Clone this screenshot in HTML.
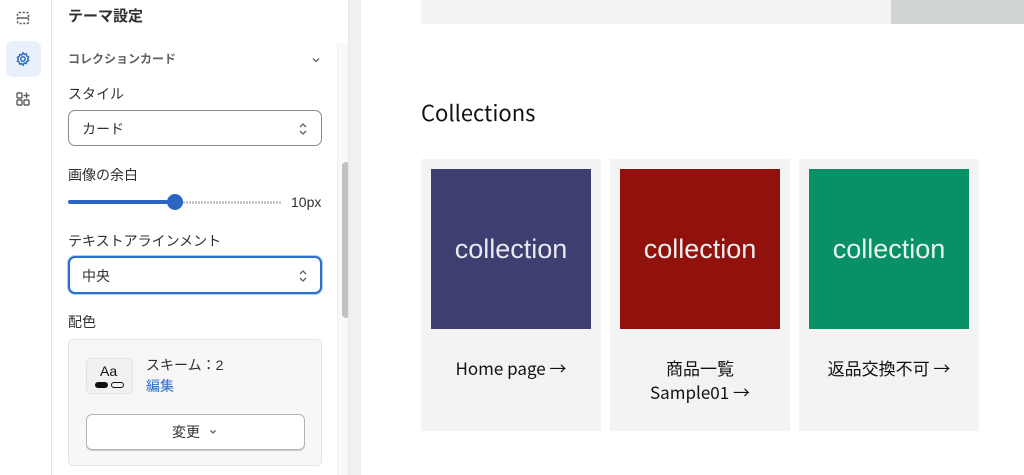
<!DOCTYPE html>
<html><head><meta charset="utf-8"><style>
*{box-sizing:border-box;margin:0;padding:0}
body{width:1024px;height:475px;overflow:hidden;background:#fff;font-family:"Liberation Sans","Noto Sans CJK JP",sans-serif;color:#303030;position:relative}
.abs{position:absolute}
.t{position:absolute;white-space:nowrap;line-height:1}
.sel{position:absolute;left:68px;width:254px;border:1px solid #8a8a8a;border-radius:7px;background:#fff;font-size:14px}
</style></head><body>
<!-- rail -->
<div class="abs" style="left:0;top:0;width:52px;height:475px;background:#fff;border-right:1px solid #e3e3e3"></div>
<div class="abs" style="left:6px;top:41px;width:35px;height:36px;background:#eaf0fb;border-radius:7px"></div>
<svg class="abs" style="left:15px;top:10px" width="16" height="16" viewBox="0 0 16 16" fill="none" stroke="#5c5f62" stroke-width="1.5"><rect x="2.5" y="2.5" width="11" height="11" rx="1.5" stroke-dasharray="2.2 1.5"/><path d="M2.5 8h11"/></svg>
<svg class="abs" style="left:15px;top:51px" width="16" height="16" viewBox="0 0 16 16" fill="none" stroke="#2c6ecb" stroke-width="1.5"><circle cx="8" cy="8" r="2.2"/><path d="M8 1.8l1.3 1.6 2-.5.4 2 1.9.9-.9 1.9.9 1.9-1.9.9-.4 2-2-.5L8 14.2l-1.3-1.6-2 .5-.4-2-1.9-.9.9-1.9-.9-1.9 1.9-.9.4-2 2 .5z"/></svg>
<svg class="abs" style="left:15px;top:91px" width="16" height="16" viewBox="0 0 16 16" fill="none" stroke="#5c5f62" stroke-width="1.4"><rect x="2" y="2" width="5" height="5" rx="1"/><rect x="2" y="9" width="5" height="5" rx="1"/><rect x="9" y="9" width="5" height="5" rx="1"/><path d="M11.5 1.5v6M8.5 4.5h6"/></svg>
<!-- panel -->
<div class="t" style="left:68px;top:9px;font-size:15px;font-weight:bold;color:#303030">テーマ設定</div>
<div class="abs" style="left:337px;top:43px;width:11px;height:432px;background:#f9f9f9;border-left:1px solid #eee"></div>
<div class="abs" style="left:342px;top:162px;width:8px;height:156px;background:#c1c1c1;border-radius:4px"></div>
<div class="abs" style="left:348px;top:0;width:13px;height:475px;background:#eff0f2;border-left:1px solid #e6e6e6"></div>
<div class="t" style="left:68px;top:53px;font-size:12px;font-weight:bold;color:#616161">コレクションカード</div>
<svg class="abs" style="left:310px;top:54px" width="12" height="12" viewBox="0 0 12 12" fill="none" stroke="#5c5f62" stroke-width="1.3"><path d="M3 4.5l3 3 3-3"/></svg>
<div class="t" style="left:68px;top:87px;font-size:14px">スタイル</div>
<div class="sel" style="top:110px;height:36px"><span class="t" style="left:13px;top:11px">カード</span>
<svg class="abs" style="left:228px;top:10px" width="12" height="16" viewBox="0 0 12 16" fill="none" stroke="#5c5f62" stroke-width="1.3"><path d="M3 6l3-3 3 3M3 10l3 3 3-3"/></svg></div>
<div class="t" style="left:68px;top:168px;font-size:14px">画像の余白</div>
<div class="abs" style="left:68px;top:200px;width:107px;height:4px;background:#2c64c4;border-radius:2px"></div>
<div class="abs" style="left:183px;top:201px;width:99px;height:3px;background:repeating-linear-gradient(90deg,#c9c9c9 0 2px,transparent 2px 3px)"></div>
<div class="abs" style="left:167px;top:194px;width:16px;height:16px;background:#2c64c4;border-radius:50%"></div>
<div class="t" style="left:291px;top:195px;font-size:14px">10px</div>
<div class="t" style="left:68px;top:234px;font-size:14px">テキストアラインメント</div>
<div class="sel" style="top:256px;height:38px;border:2px solid #2c6ecb;box-shadow:0 0 0 1px #b5cdf0"><span class="t" style="left:12px;top:11px">中央</span>
<svg class="abs" style="left:227px;top:10px" width="12" height="16" viewBox="0 0 12 16" fill="none" stroke="#5c5f62" stroke-width="1.3"><path d="M3 6l3-3 3 3M3 10l3 3 3-3"/></svg></div>
<div class="t" style="left:68px;top:315px;font-size:14px">配色</div>
<div class="abs" style="left:68px;top:339px;width:254px;height:127px;background:#f7f7f8;border:1px solid #e3e3e3;border-radius:5px"></div>
<div class="abs" style="left:86px;top:358px;width:47px;height:36px;background:#f1f1f1;border:1px solid #e3e3e3;border-radius:4px"></div>
<div class="t" style="left:100px;top:364px;font-size:14px;color:#111">Aa</div>
<div class="abs" style="left:95px;top:382px;width:13px;height:6px;background:#111;border-radius:3px"></div>
<div class="abs" style="left:111px;top:382px;width:13px;height:6px;border:1px solid #111;border-radius:3px"></div>
<div class="t" style="left:146px;top:358px;font-size:14px">スキーム：2</div>
<div class="t" style="left:146px;top:379px;font-size:14px;color:#2c6ecb">編集</div>
<div class="abs" style="left:86px;top:414px;width:219px;height:36px;background:#fff;border:1px solid #b5b5b5;border-radius:6px;box-shadow:0 1px 0 #ccc"></div>
<div class="t" style="left:172px;top:425px;font-size:14px">変更</div>
<svg class="abs" style="left:207px;top:426px" width="12" height="12" viewBox="0 0 12 12" fill="none" stroke="#5c5f62" stroke-width="1.3"><path d="M3.5 4.5l2.5 2.5 2.5-2.5"/></svg>
<!-- preview -->
<div class="abs" style="left:421px;top:0;width:470px;height:24px;background:#f3f3f3"></div>
<div class="abs" style="left:891px;top:0;width:133px;height:24px;background:#d0d5d2"></div>
<div class="t" style="left:421px;top:101px;font-size:22px;color:#121212;font-family:'Noto Sans CJK JP',sans-serif">Collections</div>
<div class="abs" style="left:421px;top:159px;width:180px;height:272px;background:#f3f3f3"></div>
<div class="abs" style="left:610px;top:159px;width:180px;height:272px;background:#f3f3f3"></div>
<div class="abs" style="left:799px;top:159px;width:180px;height:272px;background:#f3f3f3"></div>
<div class="abs" style="left:431px;top:169px;width:160px;height:160px;background:#3e3f71"></div>
<div class="abs" style="left:620px;top:169px;width:160px;height:160px;background:#91120c"></div>
<div class="abs" style="left:809px;top:169px;width:160px;height:160px;background:#0a9067"></div>
<div class="t" style="left:431px;top:236px;width:160px;text-align:center;font-size:27px;color:#e8e8f0">collection</div>
<div class="t" style="left:620px;top:236px;width:160px;text-align:center;font-size:27px;color:#eee">collection</div>
<div class="t" style="left:809px;top:236px;width:160px;text-align:center;font-size:27px;color:#e8f4ee">collection</div>
<div style="position:absolute;font-family:'Noto Sans CJK JP',sans-serif;font-size:17px;color:#121212;line-height:24px;text-align:center">
<div class="abs" style="left:421px;top:356px;width:180px">Home page →</div>
<div class="abs" style="left:610px;top:356px;width:180px">商品一覧<br>Sample01 →</div>
<div class="abs" style="left:799px;top:356px;width:180px">返品交換不可 →</div>
</div>
</body></html>
